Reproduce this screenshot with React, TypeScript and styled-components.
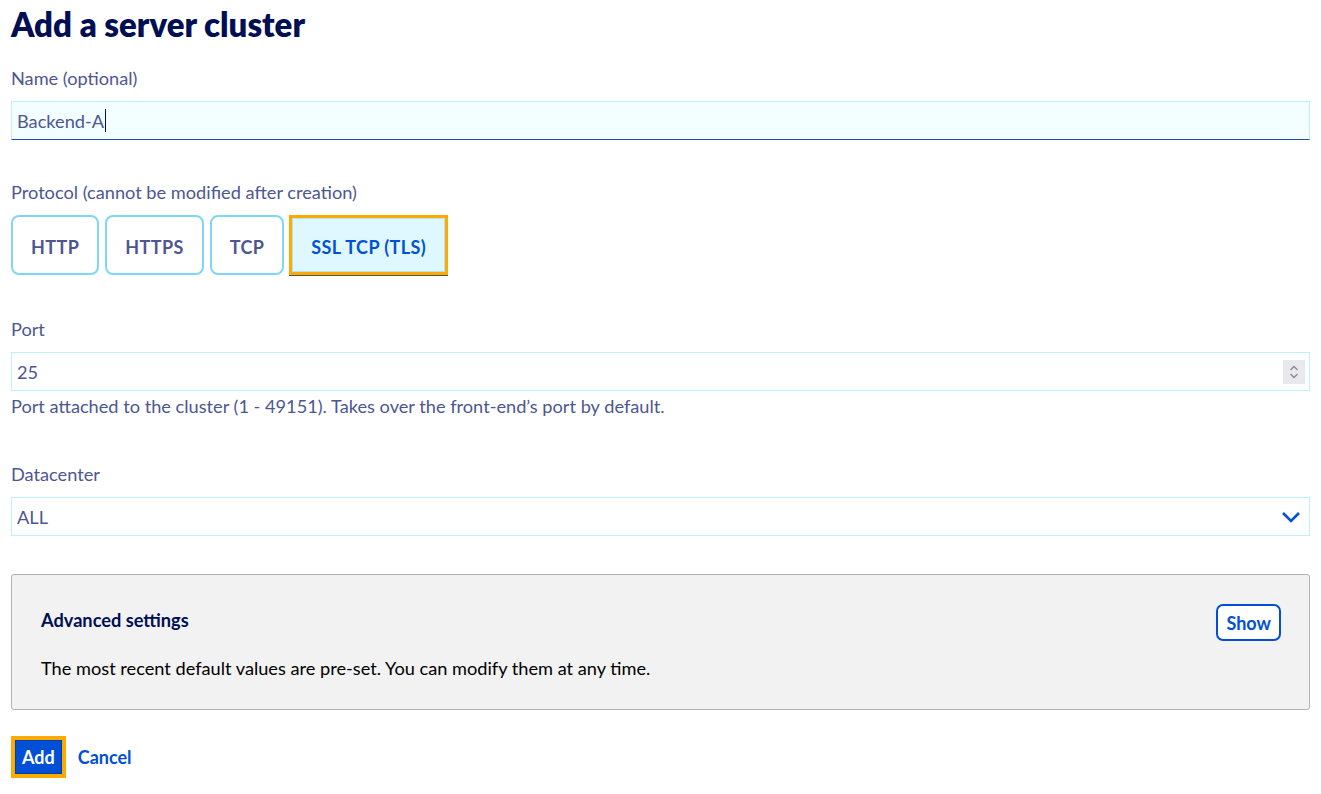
import React, { useState } from 'react'
import styled, { createGlobalStyle } from 'styled-components'

const GlobalStyle = createGlobalStyle`
  html, body {
    margin: 0;
    padding: 0;
    background: #ffffff;
  }
  body {
    font-family: Lato, 'Noto Sans', sans-serif;
  }
  * {
    box-sizing: border-box;
  }
`

const Page = styled.div`
  padding: 4px 11px 16px 11px;
  width: 1321px;
`

const Title = styled.h1`
  margin: 0 0 23px 0;
  font-size: 33px;
  font-weight: 800;
  color: #000e53;
  line-height: 40px;
`

const Field = styled.div<{ $gap?: number }>`
  display: flex;
  flex-direction: column;
  margin-bottom: ${p => p.$gap ?? 41}px;
`

const Label = styled.label`
  font-size: 18.2px;
  color: #4d5693;
  line-height: 22px;
  margin-bottom: 12px;
`

const TextInput = styled.div`
  height: 39px;
  background: #f2feff;
  border: 1px solid #bef1fa;
  border-bottom: 1px solid #1f4fa8;
  display: flex;
  align-items: center;
  padding: 0 5px;
  font-size: 18.2px;
  color: #4d5693;
`

const Caret = styled.span`
  display: inline-block;
  width: 1px;
  height: 23px;
  background: #000e53;
  margin-left: 1px;
`

const PlainInput = styled.div`
  height: 39px;
  background: #ffffff;
  border: 1px solid #bef1fa;
  display: flex;
  align-items: center;
  justify-content: space-between;
  padding: 0 4px 0 5px;
  font-size: 18.2px;
  color: #4d5693;
`

const Spinner = styled.div`
  width: 22px;
  height: 24px;
  background: #e9e9ed;
  display: flex;
  align-items: center;
  justify-content: center;
`

const Help = styled.div`
  font-size: 18.2px;
  color: #4d5693;
  line-height: 22px;
  margin-top: 4px;
`

const Tiles = styled.div`
  display: flex;
  gap: 6px;
`

const Tile = styled.button<{ $active?: boolean }>`
  height: 60px;
  padding: 3px 18px 0 18px;
  border-radius: 8px;
  border: 2px solid #7fd6f7;
  background: #ffffff;
  color: #4d5693;
  font-family: inherit;
  font-size: 18px;
  font-weight: 700;
  letter-spacing: 0.4px;
  cursor: pointer;
  ${p =>
    p.$active &&
    `
    margin-left: -1px;
    border-radius: 0;
    border: 3px solid #ffaa00;
    background: #dff8ff;
    color: #0050d7;
    box-shadow: inset 0 0 0 1px #aee6f8, 0 1px 0 0 #555555;
    padding: 3px 19px 0 19px;
  `}
`

const Select = styled.div`
  height: 39px;
  border: 1px solid #bef1fa;
  display: flex;
  align-items: center;
  justify-content: space-between;
  padding: 0 8px 0 5px;
  font-size: 18.2px;
  color: #4d5693;
`

const Panel = styled.section`
  background: #f2f2f2;
  border: 1px solid #b3b3b3;
  border-radius: 3px;
  padding: 29px 28px 30px 29px;
  margin-bottom: 26px;
`

const PanelHead = styled.div`
  display: flex;
  align-items: center;
  justify-content: space-between;
  margin-bottom: 16px;
`

const PanelTitle = styled.h4`
  margin: 0 0 6px 0;
  font-size: 18.2px;
  font-weight: 700;
  color: #000e53;
`

const PanelText = styled.p`
  margin: 0;
  font-size: 18.2px;
  line-height: 22px;
  color: #000000;
`

const OutlineButton = styled.button`
  height: 37px;
  padding: 0 8px;
  border: 2px solid #0050d7;
  border-radius: 7px;
  background: #ffffff;
  color: #0050d7;
  font-family: inherit;
  font-size: 18px;
  font-weight: 700;
  cursor: pointer;
`

const Actions = styled.div`
  display: flex;
  align-items: center;
  gap: 12px;
`

const PrimaryButton = styled.button`
  height: 42px;
  padding: 0 7px;
  border: 4px solid #ffaa00;
  background: #0050d7;
  box-shadow: inset 0 0 0 1px #003ea8;
  color: #ffffff;
  font-family: inherit;
  font-size: 18px;
  font-weight: 700;
  cursor: pointer;
`

const LinkButton = styled.button`
  border: none;
  background: none;
  padding: 0;
  color: #0050d7;
  font-family: inherit;
  font-size: 18px;
  font-weight: 700;
  cursor: pointer;
`

const protocols = ['HTTP', 'HTTPS', 'TCP', 'SSL TCP (TLS)']

export default function App() {
  const [protocol, setProtocol] = useState('SSL TCP (TLS)')

  return (
    <>
      <GlobalStyle />
      <Page>
        <Title>Add a server cluster</Title>

        <Field>
          <Label>Name (optional)</Label>
          <TextInput>
            Backend-A
            <Caret />
          </TextInput>
        </Field>

        <Field $gap={43}>
          <Label>Protocol (cannot be modified after creation)</Label>
          <Tiles>
            {protocols.map(p => (
              <Tile key={p} $active={protocol === p} onClick={() => setProtocol(p)}>
                {p}
              </Tile>
            ))}
          </Tiles>
        </Field>

        <Field $gap={46}>
          <Label>Port</Label>
          <PlainInput>
            25
            <Spinner>
              <svg width="12" height="18" viewBox="0 0 12 18" fill="none" stroke="#8a8a99" strokeWidth="1.4">
                <path d="M2.5 7 L6 3.5 L9.5 7" />
                <path d="M2.5 11 L6 14.5 L9.5 11" />
              </svg>
            </Spinner>
          </PlainInput>
          <Help>Port attached to the cluster (1 - 49151). Takes over the front-end’s port by default.</Help>
        </Field>

        <Field $gap={38}>
          <Label>Datacenter</Label>
          <Select>
            ALL
            <svg width="20" height="12" viewBox="0 0 20 12" fill="none" stroke="#0050d7" strokeWidth="2.6">
              <path d="M2 2 L10 10 L18 2" />
            </svg>
          </Select>
        </Field>

        <Panel>
          <PanelHead>
            <PanelTitle>Advanced settings</PanelTitle>
            <OutlineButton>Show</OutlineButton>
          </PanelHead>
          <PanelText>The most recent default values are pre-set. You can modify them at any time.</PanelText>
        </Panel>

        <Actions>
          <PrimaryButton>Add</PrimaryButton>
          <LinkButton>Cancel</LinkButton>
        </Actions>
      </Page>
    </>
  )
}
